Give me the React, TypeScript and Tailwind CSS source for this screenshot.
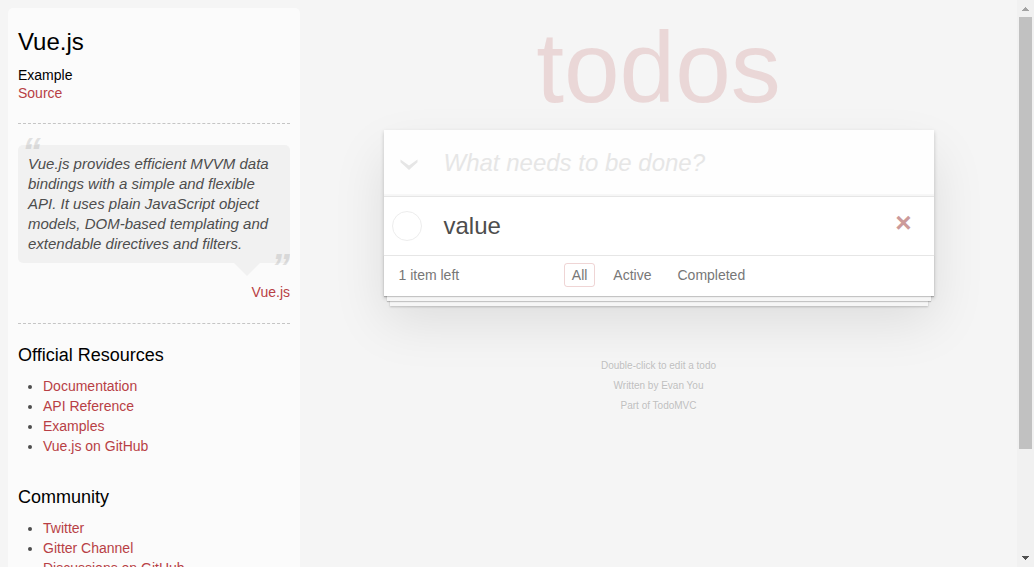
import { useState } from "react";

const resources = ["Documentation", "API Reference", "Examples", "Vue.js on GitHub"];
const community = ["Twitter", "Gitter Channel", "Discussions on GitHub"];
const filters = ["All", "Active", "Completed"];

function LinkList({ title, items }: { title: string; items: string[] }) {
  return (
    <section className="mb-[30px]">
      <h4 className="mb-2.5 text-lg leading-[22px] text-black">{title}</h4>
      <ul className="list-disc pl-[25px] text-sm leading-5">
        {items.map((item) => (
          <li key={item}>
            <a href="#" className="text-[#b83f45] hover:underline">
              {item}
            </a>
          </li>
        ))}
      </ul>
    </section>
  );
}

function Sidebar() {
  return (
    <aside className="mt-2 ml-2 w-[292px] shrink-0 overflow-hidden rounded-t-[5px] bg-white/60 px-2.5 pt-5">
      <header>
        <h3 className="mb-2.5 text-2xl leading-7 text-black">Vue.js</h3>
        <h5 className="text-sm leading-[18px] text-black">Example</h5>
        <a href="#" className="block text-sm leading-[18px] text-[#b83f45] hover:underline">
          Source
        </a>
      </header>
      <hr className="my-[21px] border-t border-dashed border-[#c5c5c5]" />
      <blockquote className="relative rounded-[5px] bg-black/4 p-[9px] pl-2.5 text-[15px] leading-5 italic">
        <span aria-hidden="true" className="absolute -top-3 left-1 text-[38px] leading-none font-bold opacity-15">
          “
        </span>
        <p>
          Vue.js provides efficient MVVM data bindings with a simple and flexible API. It uses plain JavaScript object
          models, DOM-based templating and extendable directives and filters.
        </p>
        <span aria-hidden="true" className="absolute right-0 -bottom-6 text-[38px] leading-none font-bold opacity-15">
          ”
        </span>
        <span className="absolute top-full right-[30px] border-x-[13px] border-t-[13px] border-x-transparent border-t-black/4" />
      </blockquote>
      <footer className="mt-5 text-right text-sm leading-[18px]">
        <a href="#" className="text-[#b83f45] hover:underline">
          Vue.js
        </a>
      </footer>
      <hr className="mt-[22px] mb-5 border-t border-dashed border-[#c5c5c5]" />
      <LinkList title="Official Resources" items={resources} />
      <LinkList title="Community" items={community} />
    </aside>
  );
}

function TodoCard() {
  const [filter, setFilter] = useState("All");
  return (
    <section className="bg-white shadow-[0_2px_4px_rgba(0,0,0,0.2),0_25px_50px_rgba(0,0,0,0.1)]">
      <header className="flex bg-black/[0.003] shadow-[inset_0_-2px_1px_rgba(0,0,0,0.03)]">
        <label className="flex w-[60px] shrink-0 cursor-pointer items-center pl-4">
          <input type="checkbox" aria-label="Mark all as complete" className="sr-only" />
          <svg width="18" height="12" viewBox="0 0 18 12" className="mt-1" aria-hidden="true">
            <path d="M0.5 0.5V3.2L9 11L17.5 3.2V0.5L9 6.6Z" fill="#e6e6e6" />
          </svg>
        </label>
        <input
          aria-label="New todo"
          placeholder="What needs to be done?"
          className="min-w-0 flex-1 bg-transparent py-4 pr-4 text-2xl leading-[34px] outline-none placeholder:text-[#e6e6e6] placeholder:italic"
        />
      </header>
      <ul className="border-t border-[#e6e6e6]">
        <li className="flex items-center pr-2.5 pl-2">
          <input
            id="todo"
            type="checkbox"
            className="mr-[22px] size-[30px] shrink-0 appearance-none rounded-full border border-[#ededed] bg-white checked:border-[#bddad5]"
          />
          <label htmlFor="todo" className="flex-1 py-[15px] text-2xl leading-7">
            value
          </label>
          <button aria-label="Delete value" className="h-10 w-10 pb-1.5 text-[28px] leading-none font-bold text-[#cc9a9a]">
            ×
          </button>
        </li>
      </ul>
      <footer className="grid grid-cols-[1fr_auto_1fr] items-center border-t border-[#e6e6e6] px-[15px] pt-[7px] pb-[9px] text-sm leading-5 text-[#777777] shadow-[0_1px_1px_rgba(0,0,0,0.2),0_8px_0_-3px_#f6f6f6,0_9px_1px_-3px_rgba(0,0,0,0.2),0_16px_0_-6px_#f6f6f6,0_17px_2px_-6px_rgba(0,0,0,0.2)]">
        <span>1 item left</span>
        <div className="flex gap-2.5">
          {filters.map((name) => (
            <button
              key={name}
              onClick={() => setFilter(name)}
              className={
                filter === name
                  ? "rounded-[3px] border border-[#af2f2f]/20 px-[7px] leading-[22px]"
                  : "rounded-[3px] border border-transparent px-[7px] leading-[22px] hover:border-[#af2f2f]/10"
              }
            >
              {name}
            </button>
          ))}
        </div>
      </footer>
    </section>
  );
}

function ScrollTrack() {
  return (
    <div aria-hidden="true" className="flex w-[17px] shrink-0 flex-col items-stretch bg-[#f1f1f1]">
      <svg width="17" height="17" viewBox="0 0 17 17" shapeRendering="crispEdges" fill="#a3a3a3">
        <path d="M8 7h1v1h1v1h1v1h1v1H5v-1h1V9h1V8h1z" />
      </svg>
      <div className="mx-0.5 grow-[432] basis-0 bg-[#c1c1c1]" />
      <div className="grow-[101] basis-0" />
      <svg width="17" height="17" viewBox="0 0 17 17" shapeRendering="crispEdges" fill="#505050">
        <path d="M5 6h7v1h-1v1h-1v1H9v1H8V9H7V8H6V7H5z" />
      </svg>
    </div>
  );
}

export default function App() {
  return (
    <div className="flex h-screen overflow-hidden bg-[#f5f5f5] font-['Liberation_Sans',Arial,sans-serif] text-[#4d4d4d]">
      <Sidebar />
      <main className="flex min-w-0 flex-1 justify-center">
        <div className="w-full max-w-[550px]">
          <h1 className="pt-1 text-center text-[100px] leading-[126px] text-[#af2f2f]/15">todos</h1>
          <TodoCard />
          <footer className="mt-[60px] text-center text-[10px] leading-5 text-[#bfbfbf] [text-shadow:0_1px_0_rgba(255,255,255,0.5)]">
            <p>Double-click to edit a todo</p>
            <p>
              Written by <a href="#">Evan You</a>
            </p>
            <p>
              Part of <a href="#">TodoMVC</a>
            </p>
          </footer>
        </div>
      </main>
      <ScrollTrack />
    </div>
  );
}
